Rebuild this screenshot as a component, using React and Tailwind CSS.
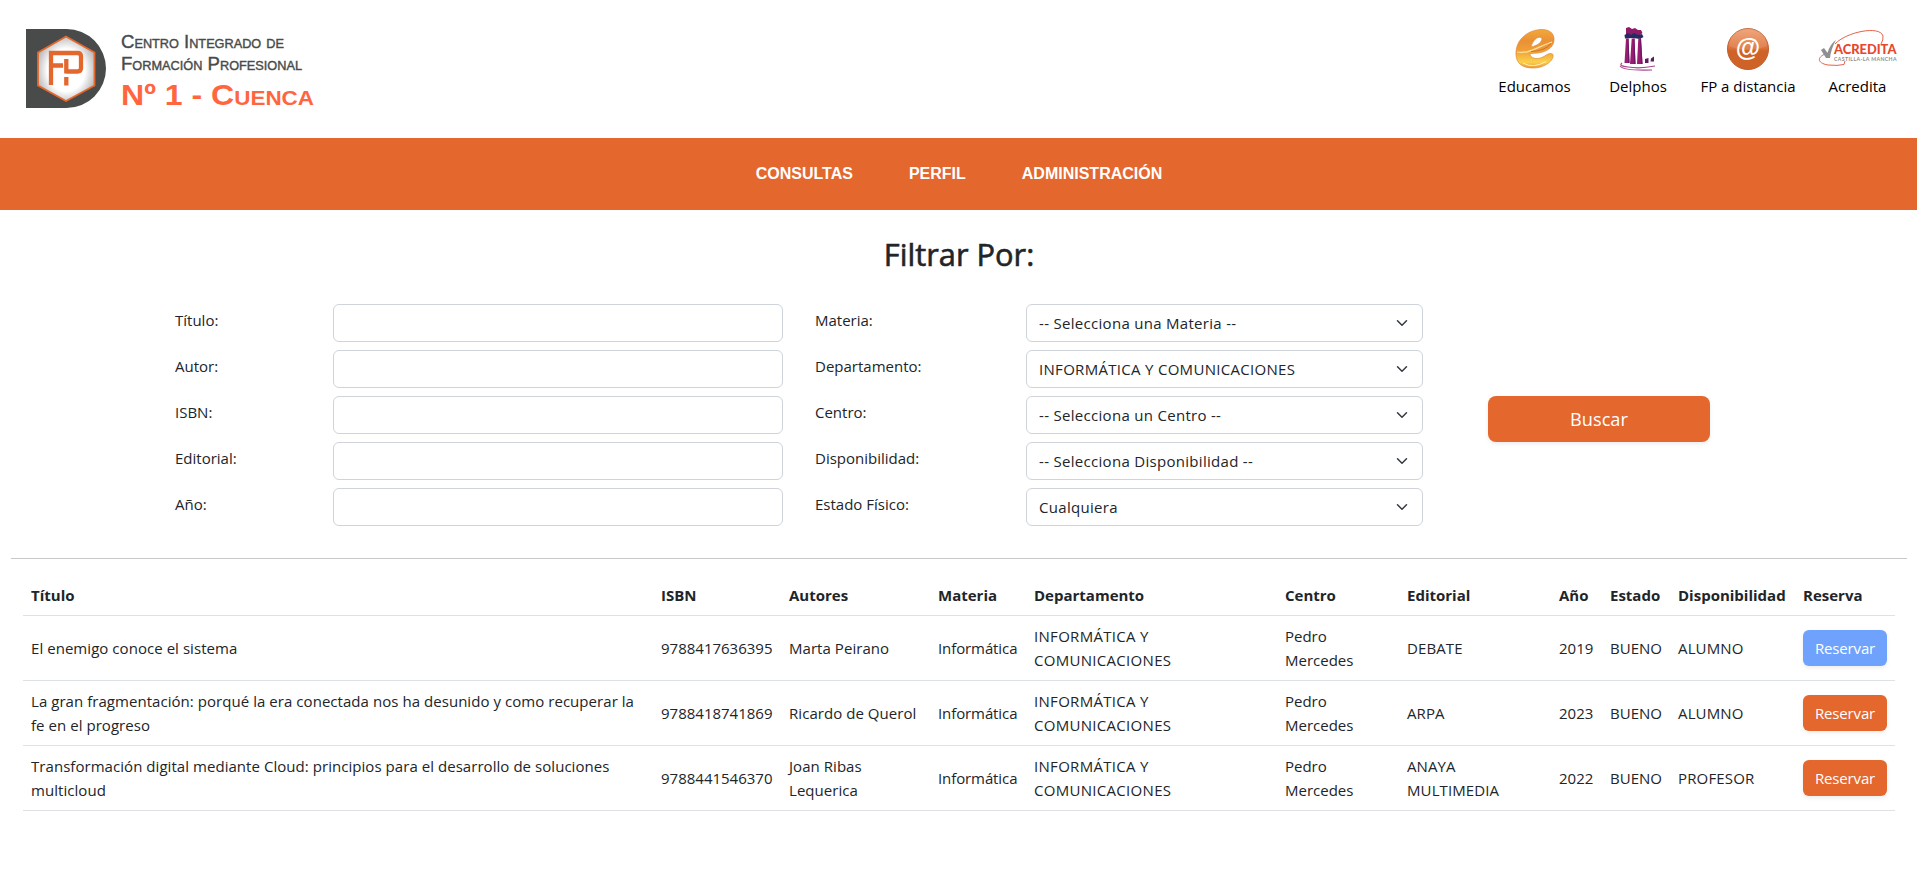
function Logo() {
  return (
    <svg className="h-[138px] w-[340px]" viewBox="0 0 340 138">
      <defs>
        <radialGradient id="hexFill" cx="0.5" cy="0.52" r="0.55">
          <stop offset="0.6" stopColor="#ffffff" />
          <stop offset="1" stopColor="#b4b5b4" />
        </radialGradient>
      </defs>
      <path d="M26 29H66.500A39.500 39.500 0 0 1 66.500 108H26Z" fill="#484b4a" />
      <path d="M66 36.500L94.500 52.500V85.500L66 101L38 85.500V52.500Z" fill="url(#hexFill)" stroke="#e4672e" strokeWidth="1.800" />
      <path d="M51 85V53H77.500Q81 53 81 56.500V68Q81 71.500 77.500 71.500H66.300M66.300 59V73.500M66.300 77V85.500M51 65.500H63" fill="none" stroke="#e4672e" strokeWidth="4.300" />
      <g fontFamily="Liberation Sans, Arial, sans-serif" style={{ fontVariant: "small-caps" }}>
        <text x="121" y="48" fontSize="19" fill="#484b4a" stroke="#484b4a" strokeWidth="0.400" textLength="163" lengthAdjust="spacingAndGlyphs">Centro Integrado de</text>
        <text x="121" y="70" fontSize="19" fill="#484b4a" stroke="#484b4a" strokeWidth="0.400" textLength="181" lengthAdjust="spacingAndGlyphs">Formación Profesional</text>
        <text x="121" y="104.500" fontSize="30" fontWeight="700" fill="#ff6640" textLength="193" lengthAdjust="spacingAndGlyphs">Nº 1 - Cuenca</text>
      </g>
    </svg>
  );
}

function EducamosIcon() {
  return (
    <svg className="h-[48px] w-[48px]" viewBox="0 0 48 48">
      <defs>
        <linearGradient id="eFill" x1="0" y1="0" x2="0" y2="1">
          <stop offset="0" stopColor="#f2a83c" />
          <stop offset="0.300" stopColor="#ea9036" />
          <stop offset="0.550" stopColor="#f0a036" />
          <stop offset="0.850" stopColor="#fbd04a" />
          <stop offset="1" stopColor="#eb9a3a" />
        </linearGradient>
      </defs>
      <path
        fillRule="evenodd"
        fill="url(#eFill)"
        stroke="#dd8a3c"
        strokeWidth="0.700"
        d="M5 31C4 15 18 5.500 31 5.500C41 5.500 44.500 12 42.500 19C40 26.500 31 29.500 19 29.500C19 34.500 26 36 32 33C36.500 30.500 39 28 42 30.500C43.500 36 34 44 22 44C11 44 5.500 39 5 31ZM20 23C21.500 17 26 12 30 13.500C33 16 28 21.500 20 23Z"
      />
      <path d="M6 28C18 30 24 24 41 18" fill="none" stroke="#fbe2a0" strokeWidth="1.200" />
      <path d="M20 27.500Q34 27 40 19.500" fill="none" stroke="#c9602c" strokeWidth="0.800" />
      <path d="M12 39Q22 45 35 37.500" fill="none" stroke="#fff0b8" strokeWidth="1" />
    </svg>
  );
}

function DelphosIcon() {
  return (
    <svg className="h-[48px] w-[48px]" viewBox="0 0 48 48">
      <path d="M12 4L15 3L18 5L21 4L24 6L27 6L28.500 9L26 11L12 11Z" fill="#8f1a68" />
      <path d="M10.500 11L14 9L17 11L20 9L24 11L28 10L29.500 13L26 15L19 14L11 14.500Z" fill="#1f2d63" />
      <path d="M12 14.500H14.500L15.500 39H10.500Z M17.700 14.500H20.500L21.500 40H16Z M24.300 14.500H27L28.500 40H23Z" fill="#9b1b74" />
      <path d="M13.700 14.500H14.500L15.500 39H14Z M19.500 14.500H20.500L21.500 40H20Z M26 14.500H27L28.500 40H27Z" fill="#6d1763" />
      <path d="M31 35L34.500 34V39H31Z M37 34.500L40 32.500V37.500H36.500Z" fill="#5c1a60" />
      <path d="M8 39Q4 42 14 43Q26 45 41 42M6 42Q10 47 38 46" fill="none" stroke="#a8458f" strokeWidth="1.200" />
    </svg>
  );
}

function DistanciaIcon() {
  return (
    <svg className="h-[48px] w-[48px]" viewBox="0 0 48 48">
      <defs>
        <linearGradient id="atFill" x1="0" y1="0" x2="0" y2="1">
          <stop offset="0" stopColor="#ee9a6b" />
          <stop offset="0.480" stopColor="#dc7138" />
          <stop offset="0.550" stopColor="#cf6228" />
          <stop offset="1" stopColor="#cf6226" />
        </linearGradient>
      </defs>
      <circle cx="24" cy="25" r="20.500" fill="url(#atFill)" stroke="#bf5f30" />
      <path d="M5 22A19 19 0 0 1 43 22Q24 30 5 22Z" fill="#ffffff" fillOpacity="0.120" />
      <text x="24" y="31.500" textAnchor="middle" fontFamily="Liberation Sans, Arial, sans-serif" fontSize="25" fontWeight="700" fill="#ffffff">@</text>
    </svg>
  );
}

function AcreditaIcon() {
  return (
    <svg className="h-[48px] w-[84px]" viewBox="-2 0 84 48">
      <path d="M17 20C28 8 62 1 65 12Q65.500 16 63 20M10 29C-1 32 -2 39 10 41Q20 42 26 40.500L27 37" fill="none" stroke="#e8604a" strokeWidth="1" />
      <path d="M3 26L6 24L9.500 29Q12 20 18 16Q13 25 12 34H8Z" fill="#8e8f90" />
      <g fontFamily="Lato, sans-serif">
        <text x="16" y="29.700" fontSize="13" fontWeight="900" fill="#e8472f" textLength="62.500" lengthAdjust="spacingAndGlyphs">ACREDITA</text>
        <text x="16" y="36.800" fontSize="5.200" fontWeight="700" fill="#8e8f90" textLength="62.500">CASTILLA-LA MANCHA</text>
      </g>
    </svg>
  );
}

const inputs = ["Título:", "Autor:", "ISBN:", "Editorial:", "Año:"];

const selects = [
  ["Materia:", "-- Selecciona una Materia --"],
  ["Departamento:", "INFORMÁTICA Y COMUNICACIONES"],
  ["Centro:", "-- Selecciona un Centro --"],
  ["Disponibilidad:", "-- Selecciona Disponibilidad --"],
  ["Estado Físico:", "Cualquiera"],
];

const headers = ["Título", "ISBN", "Autores", "Materia", "Departamento", "Centro", "Editorial", "Año", "Estado", "Disponibilidad", "Reserva"];

const books = [
  ["El enemigo conoce el sistema", "9788417636395", "Marta Peirano", "DEBATE", "2019", "ALUMNO"],
  ["La gran fragmentación: porqué la era conectada nos ha desunido y como recuperar la fe en el progreso", "9788418741869", "Ricardo de Querol", "ARPA", "2023", "ALUMNO"],
  ["Transformación digital mediante Cloud: principios para el desarrollo de soluciones multicloud", "9788441546370", "Joan Ribas Lequerica", "ANAYA MULTIMEDIA", "2022", "PROFESOR"],
];

function AppLink({ icon, label, className }) {
  return (
    <a className={`flex flex-col items-center pt-6 text-black ${className}`}>
      {icon}
      <span className="mt-[2px] leading-6">{label}</span>
    </a>
  );
}

function Cell({ children, className = "" }) {
  return <td className={`border-b border-[#dee2e6] px-2 pt-2 pb-2 align-middle ${className}`}>{children}</td>;
}

export default function App() {
  return (
    <div className="min-h-[874px] bg-white font-['Open_Sans','Noto_Sans',sans-serif] text-[15px] leading-6 text-[#212529]">
      <header className="flex h-[138px] justify-between pr-[5px]">
        <Logo />
        <div className="flex">
          <AppLink className="w-[97px]" icon={<EducamosIcon />} label="Educamos" />
          <AppLink className="w-[110px]" icon={<DelphosIcon />} label="Delphos" />
          <AppLink className="w-[110px]" icon={<DistanciaIcon />} label="FP a distancia" />
          <AppLink className="w-[109px]" icon={<AcreditaIcon />} label="Acredita" />
        </div>
      </header>

      <nav className="flex h-[72px] items-center justify-center gap-14 bg-[#e4672e] pb-px pl-px font-['Liberation_Sans',Arial,sans-serif] text-base font-bold text-white">
        <a>CONSULTAS</a>
        <a>PERFIL</a>
        <a>ADMINISTRACIÓN</a>
      </nav>

      <h2 className="mt-[25px] pl-px text-center text-[30.8px] leading-[38px] font-medium [-webkit-text-stroke:0.6px_#212529]">Filtrar Por:</h2>

      <form className="mt-[31px] flex pl-[175px]">
        <div className="grid gap-2">
          {inputs.map((label) => (
            <div key={label} className="flex">
              <label className="w-[158px] pt-1">{label}</label>
              <input className="h-[38px] w-[450px] rounded-md border border-[#ced4da] bg-white px-3" />
            </div>
          ))}
        </div>
        <div className="ml-8 grid gap-2">
          {selects.map(([label, value]) => (
            <div key={label} className="flex">
              <label className="w-[211px] pt-1">{label}</label>
              <div className="flex h-[38px] w-[397px] items-center justify-between rounded-md border border-[#ced4da] bg-white pr-3 pl-3">
                <span className="tracking-[0.3px]">{value}</span>
                <svg className="h-3 w-4" viewBox="0 0 16 16" fill="none" stroke="#343a40" strokeWidth="2" strokeLinecap="round" strokeLinejoin="round">
                  <path d="m2 5 6 6 6-6" />
                </svg>
              </div>
            </div>
          ))}
        </div>
        <button type="button" className="mt-[92px] ml-[65px] h-[46px] w-[222px] rounded-lg bg-[#e4672e] text-[18.2px] text-white shadow-[0_2px_4px_rgba(0,0,0,0.075)]">
          Buscar
        </button>
      </form>

      <hr className="mt-8 mr-[10px] ml-[11px] border-t border-[#c7c8c9]" />

      <table className="mt-4 ml-[23px] w-[1872px] table-fixed border-separate border-spacing-0 text-left">
        <colgroup>
          <col className="w-[630px]" />
          <col className="w-[128px]" />
          <col className="w-[149px]" />
          <col className="w-[96px]" />
          <col className="w-[251px]" />
          <col className="w-[122px]" />
          <col className="w-[152px]" />
          <col className="w-[51px]" />
          <col className="w-[68px]" />
          <col className="w-[125px]" />
          <col className="w-[100px]" />
        </colgroup>
        <thead>
          <tr>
            {headers.map((h) => (
              <th key={h} className="border-b border-[#dee2e6] p-2 font-bold">{h}</th>
            ))}
          </tr>
        </thead>
        <tbody>
          {books.map(([title, isbn, author, publisher, year, availability], i) => (
            <tr key={isbn}>
              <Cell className="tracking-[0.05px]">{title}</Cell>
              <Cell>{isbn}</Cell>
              <Cell className="tracking-[0.05px]">{author}</Cell>
              <Cell className="tracking-[-0.1px]">Informática</Cell>
              <Cell className="pr-20 tracking-[0.3px]">INFORMÁTICA Y COMUNICACIONES</Cell>
              <Cell>Pedro<br />Mercedes</Cell>
              <Cell className="pr-10 tracking-[0.1px]">{publisher}</Cell>
              <Cell>{year}</Cell>
              <Cell>BUENO</Cell>
              <Cell className="tracking-[0.15px]">{availability}</Cell>
              <Cell>
                <button
                  type="button"
                  className={`block h-9 w-[84px] rounded-md tracking-[-0.15px] text-white shadow-[0_2px_4px_rgba(0,0,0,0.075)] ${i === 0 ? "bg-[#6ea2fc]" : "bg-[#e4672e]"}`}
                >
                  Reservar
                </button>
              </Cell>
            </tr>
          ))}
        </tbody>
      </table>
    </div>
  );
}
